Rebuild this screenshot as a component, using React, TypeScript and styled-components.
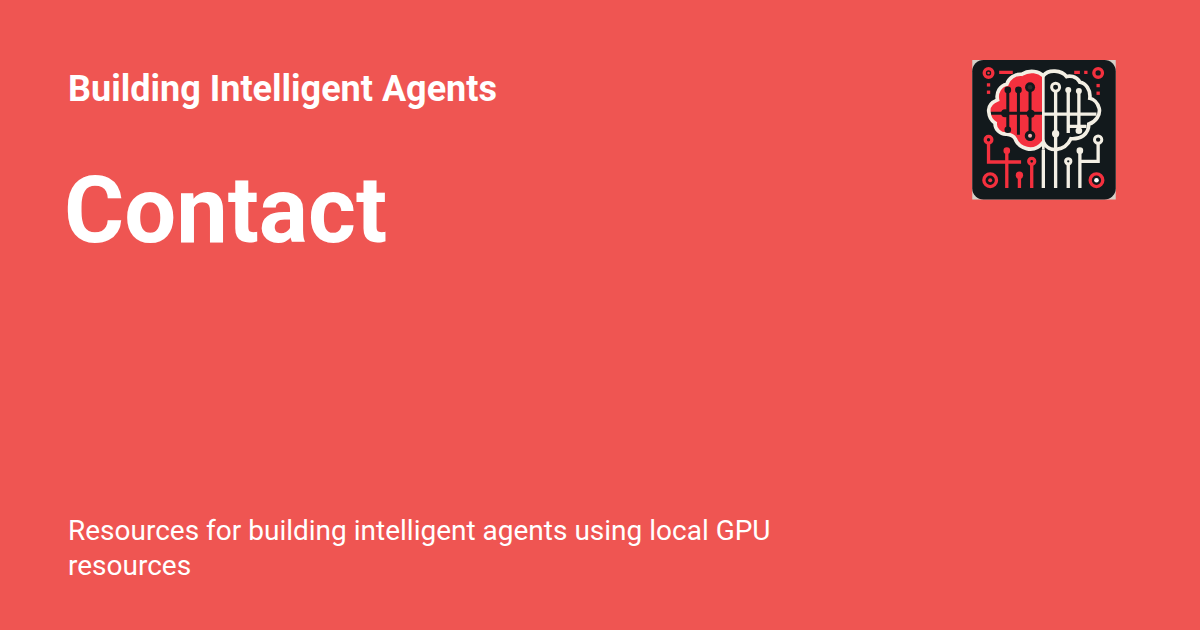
import React from "react";
import styled, { createGlobalStyle } from "styled-components";

const Global = createGlobalStyle`
  html, body { margin: 0; padding: 0; background: #ef5552; }
  body { font-family: Roboto, "Liberation Sans", sans-serif; }
`;

const Card = styled.main`
  width: 1200px;
  height: 630px;
  box-sizing: border-box;
  padding: 60px 84px 47px 68px;
  background: #ef5552;
  color: #fff;
  display: flex;
  flex-direction: column;
  overflow: hidden;
`;

const Header = styled.header`
  display: flex;
  justify-content: space-between;
  align-items: flex-start;
`;

const TitleBlock = styled.div`
  display: flex;
  flex-direction: column;
`;

const SiteName = styled.div`
  font-size: 36px;
  font-weight: 700;
  line-height: 58px;
`;

const PageTitle = styled.h1`
  margin: 0 0 0 -4px;
  font-size: 92px;
  font-weight: 700;
  line-height: 100px;
  padding-top: 43px;
`;

const Description = styled.p`
  margin: auto 0 0;
  width: 740px;
  font-size: 28px;
  font-weight: 400;
  line-height: 35px;
`;

const LogoFrame = styled.svg`
  display: block;
  flex: none;
  width: 144px;
  height: 139.5px;
  filter: blur(0.35px);
`;

const red = "#f4303e";
const ink = "#12191c";
const cream = "#f3efe4";

function Logo() {
  const leftV = "M128 105V225M160 105V240M195 97V243M75 175H235";
  const rightV = "M235 285V400M272 110V400M310 105V235M342 108V235M235 178H395M310 215H365";
  const brain = "M235 62C222 50 195 42 170 58C150 56 130 70 125 88C105 92 92 112 97 135C80 142 68 155 71 172C72 188 82 200 90 205C88 222 105 240 125 238C140 240 148 248 150 252C160 280 205 300 235 262C250 296 300 290 318 252C345 254 372 240 372 208C392 202 408 180 403 160C398 142 385 132 375 130C378 105 362 84 345 82C335 62 312 62 305 65C290 45 250 42 235 62Z";
  const leftHalf = "M235 62C222 50 195 42 170 58C150 56 130 70 125 88C105 92 92 112 97 135C80 142 68 155 71 172C72 188 82 200 90 205C88 222 105 240 125 238C140 240 148 248 150 252C160 280 205 300 235 262Z";
  return (
    <LogoFrame viewBox="21 15 432 420" role="img" aria-label="Brain circuit logo">
      <rect x="21" y="15" width="432" height="420" fill="#d5d0c8" />
      <rect x="21" y="15" width="432" height="420" rx="34" fill={ink} />
      <path d={leftHalf} fill={red} />
      <path d={leftV} stroke={ink} strokeWidth="9" fill="none" />
      <path d={rightV} stroke={cream} strokeWidth="10" fill="none" />
      <path d={brain} stroke={cream} strokeWidth="11" fill="none" />
      <path d="M235 62V285" stroke={cream} strokeWidth="8" fill="none" />
      <g fill={ink}>
        <circle cx="128" cy="105" r="10" />
        <circle cx="160" cy="105" r="10" />
        <circle cx="120" cy="175" r="12" />
        <circle cx="197" cy="177" r="12" />
        <circle cx="128" cy="225" r="10" />
        <circle cx="195" cy="97" r="15" />
        <circle cx="195" cy="243" r="16" />
      </g>
      <circle cx="195" cy="243" r="6" fill="#f3a9ae" />
      <circle cx="195" cy="97" r="7" fill="#2c2c2c" />
      <g fill={cream}>
        <circle cx="310" cy="105" r="9" />
        <circle cx="342" cy="108" r="9" />
        <circle cx="272" cy="237" r="11" />
        <circle cx="342" cy="228" r="10" />
        <circle cx="345" cy="288" r="10" />
      </g>
      <path d="M400 266V320H345M345 288V400M310 320V400" stroke={cream} strokeWidth="10" fill="none" />
      <g fill={ink} stroke={cream} strokeWidth="9">
        <circle cx="272" cy="97" r="12" />
        <circle cx="310" cy="320" r="8" />
        <circle cx="400" cy="255" r="11" />
      </g>
      <g stroke={red} strokeWidth="10" fill="none">
        <path d="M102 52H143M328 52H345M358 52H368" />
        <path d="M70 267V322H168M125 288V400M163 362V400M200 330V400" />
        <circle cx="70" cy="54" r="13" />
        <circle cx="400" cy="54" r="13" />
        <circle cx="70" cy="255" r="10" />
        <circle cx="200" cy="320" r="9" />
        <circle cx="75" cy="377" r="19" />
        <circle cx="395" cy="377" r="19" />
      </g>
      <g fill={red}>
        <circle cx="70" cy="54" r="4" />
        <circle cx="75" cy="377" r="6" />
        <circle cx="125" cy="288" r="10" />
        <circle cx="163" cy="362" r="11" />
        <rect x="65" y="85" width="10" height="10" />
        <rect x="65" y="107" width="10" height="10" />
        <rect x="395" y="87" width="10" height="10" />
        <rect x="395" y="110" width="10" height="10" />
      </g>
      <circle cx="395" cy="377" r="7" fill="#fff" />
    </LogoFrame>
  );
}

export default function App() {
  return (
    <>
      <Global />
      <Card>
        <Header>
          <TitleBlock>
            <SiteName>Building Intelligent Agents</SiteName>
            <PageTitle>Contact</PageTitle>
          </TitleBlock>
          <Logo />
        </Header>
        <Description>Resources for building intelligent agents using local GPU resources</Description>
      </Card>
    </>
  );
}
